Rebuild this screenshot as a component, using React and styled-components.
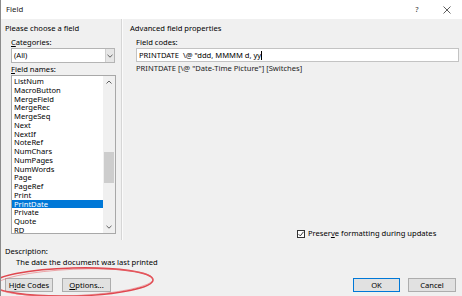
import React from "react";
import styled, { createGlobalStyle } from "styled-components";

const Global = createGlobalStyle`
  html, body { margin: 0; padding: 0; background: #fff; }
  * { box-sizing: border-box; }
`;

const Window = styled.div`
  position: relative;
  width: 462px;
  height: 296px;
  overflow: hidden;
  display: flex;
  flex-direction: column;
  background: #f0f0f0;
  border-left: 1px solid #8c8c8c;
  font-family: "Noto Sans", "Open Sans", sans-serif;
  font-size: 7.6px;
  line-height: 9px;
  color: #000;
`;

const TitleBar = styled.div`
  height: 19px;
  flex-shrink: 0;
  background: #fff;
  display: flex;
  align-items: center;
  padding-left: 5px;
`;

const Title = styled.span`
  flex: 1;
  font-size: 7.8px;
  color: #222;
`;

const TitleButton = styled.span`
  width: 30px;
  height: 19px;
  display: flex;
  align-items: center;
  justify-content: center;
  font-size: 7.5px;
  color: #333;
`;

const Main = styled.div`
  height: 221px;
  flex-shrink: 0;
  display: flex;
`;

const LeftPane = styled.div`
  width: 121px;
  flex-shrink: 0;
  padding: 5px 0 0 4px;
  border-right: 1px solid #d6d6d6;
  box-shadow: 1px 0 0 #fbfbfb;
  display: flex;
  flex-direction: column;
`;

const RightPane = styled.div`
  flex: 1;
  padding: 5px 3px 1px 8px;
  display: flex;
  flex-direction: column;
`;

const GroupTitle = styled.div`
  white-space: nowrap;
`;

const Indent = styled.div`
  margin-left: 6px;
  display: flex;
  flex-direction: column;
`;

const Label = styled.div`
  margin-top: ${(p) => p.$mt ?? 5}px;
  white-space: nowrap;
`;

const Key = styled.span`
  text-decoration: underline;
  text-underline-offset: 1px;
`;

const Select = styled.div`
  margin-top: 1px;
  width: 104px;
  height: 15px;
  background: #fff;
  border: 1px solid #b4b4b4;
  display: flex;
  align-items: center;
  padding-left: 2px;
`;

const SelectValue = styled.span`
  flex: 1;
`;

const SelectArrow = styled.span`
  width: 9px;
  height: 13px;
  background: #e6e6e6;
  border-left: 1px solid #cfcfcf;
  display: flex;
  align-items: center;
  justify-content: center;
`;

const ListBox = styled.div`
  margin-top: 1px;
  width: 105px;
  height: 159px;
  background: #fff;
  border: 1px solid #a8a8a8;
  display: flex;
`;

const Items = styled.div`
  flex: 1;
  padding-top: 1px;
  display: flex;
  flex-direction: column;
`;

const Item = styled.div`
  height: 8.75px;
  line-height: 8.75px;
  padding-left: 2px;
  white-space: nowrap;
  background: ${(p) => (p.$selected ? "#0078d7" : "transparent")};
  color: ${(p) => (p.$selected ? "#fff" : "#000")};
`;

const ScrollBar = styled.div`
  width: 12px;
  background: #f0f0f0;
  display: flex;
  flex-direction: column;
  align-items: center;
`;

const ScrollArrow = styled.div`
  height: 12px;
  width: 12px;
  display: flex;
  align-items: center;
  justify-content: center;
`;

const ScrollTrack = styled.div`
  flex: 1;
  width: 100%;
  display: flex;
  flex-direction: column;
  align-items: center;
`;

const Thumb = styled.div`
  width: 10px;
  height: 31px;
  background: #cdcdcd;
`;

const TextInput = styled.div`
  margin-top: 1px;
  height: 14px;
  background: #fff;
  border: 1px solid #c3c3c3;
  display: flex;
  align-items: center;
  padding-left: 2px;
  white-space: pre;
`;

const Caret = styled.span`
  display: inline-block;
  width: 1px;
  height: 9px;
  background: #000;
`;

const Syntax = styled.div`
  margin-top: 2px;
  white-space: pre;
  color: #222;
`;

const CheckRow = styled.label`
  margin-top: auto;
  margin-left: 167px;
  margin-bottom: 1px;
  display: flex;
  align-items: center;
  gap: 3px;
  white-space: nowrap;
`;

const CheckBox = styled.span`
  width: 8px;
  height: 8px;
  border: 1px solid #333;
  background: #fff;
  display: flex;
  align-items: center;
  justify-content: center;
`;

const Description = styled.div`
  padding-left: 4px;
  margin-top: 7px;
  display: flex;
  flex-direction: column;
`;

const DescText = styled.div`
  padding-left: 11px;
  margin-top: 2px;
  white-space: nowrap;
`;

const Footer = styled.div`
  margin-top: 11px;
  padding: 0 6px 0 4px;
  display: flex;
  align-items: center;
`;

const ButtonGroup = styled.div`
  display: flex;
  gap: ${(p) => p.$gap}px;
  margin-left: ${(p) => (p.$right ? "auto" : "0")};
`;

const Button = styled.div`
  width: ${(p) => p.$w}px;
  height: 14px;
  background: #e1e1e1;
  border: 1px solid ${(p) => (p.$default ? "#0078d7" : "#adadad")};
  display: flex;
  align-items: center;
  justify-content: center;
  white-space: nowrap;
`;

const Annotation = styled.svg`
  position: absolute;
  left: 0;
  top: 0;
  pointer-events: none;
`;

const items = [
  "ListNum", "MacroButton", "MergeField", "MergeRec", "MergeSeq", "Next", "NextIf",
  "NoteRef", "NumChars", "NumPages", "NumWords", "Page", "PageRef", "Print",
  "PrintDate", "Private", "Quote", "RD",
];

const Chevron = ({ up }) => (
  <svg width="6" height="4" viewBox="0 0 6 4">
    <path
      d={up ? "M0.5 3.5 L3 1 L5.5 3.5" : "M0.5 0.8 L3 3.2 L5.5 0.8"}
      fill="none"
      stroke="#606060"
      strokeWidth="1"
    />
  </svg>
);

export default function App() {
  return (
    <Window>
      <Global />
      <TitleBar>
        <Title>Field</Title>
        <TitleButton>?</TitleButton>
        <TitleButton>
          <svg width="8" height="8" viewBox="0 0 8 8">
            <path d="M0.5 0.5 L7.5 7.5 M7.5 0.5 L0.5 7.5" stroke="#333" strokeWidth="0.8" />
          </svg>
        </TitleButton>
      </TitleBar>
      <Main>
        <LeftPane>
          <GroupTitle>Please choose a field</GroupTitle>
          <Indent>
            <Label>
              <Key>C</Key>ategories:
            </Label>
            <Select>
              <SelectValue>(All)</SelectValue>
              <SelectArrow>
                <Chevron />
              </SelectArrow>
            </Select>
            <Label $mt={2}>
              <Key>F</Key>ield names:
            </Label>
            <ListBox>
              <Items>
                {items.map((it) => (
                  <Item key={it} $selected={it === "PrintDate"}>
                    {it}
                  </Item>
                ))}
              </Items>
              <ScrollBar>
                <ScrollArrow>
                  <Chevron up />
                </ScrollArrow>
                <ScrollTrack>
                  <Thumb style={{ marginTop: 64 }} />
                </ScrollTrack>
                <ScrollArrow>
                  <Chevron />
                </ScrollArrow>
              </ScrollBar>
            </ListBox>
          </Indent>
        </LeftPane>
        <RightPane>
          <GroupTitle>Advanced field properties</GroupTitle>
          <Indent>
            <Label>Field codes:</Label>
            <TextInput>
              {'PRINTDATE  \\@ "ddd, MMMM d, yy'}
              <Caret />
            </TextInput>
            <Syntax>{'PRINTDATE [\\@ "Date-Time Picture"] [Switches]'}</Syntax>
          </Indent>
          <CheckRow>
            <CheckBox>
              <svg width="6" height="6" viewBox="0 0 6 6">
                <path d="M0.6 3.2 L2.3 4.9 L5.5 0.8" fill="none" stroke="#222" strokeWidth="0.9" />
              </svg>
            </CheckBox>
            <span>
              Preser<Key>v</Key>e formatting during updates
            </span>
          </CheckRow>
        </RightPane>
      </Main>
      <Description>
        <div>Description:</div>
        <DescText>The date the document was last printed</DescText>
      </Description>
      <Footer>
        <ButtonGroup $gap={9}>
          <Button $w={48}>
            H<Key>i</Key>de Codes
          </Button>
          <Button $w={49}>
            <Key>O</Key>ptions...
          </Button>
        </ButtonGroup>
        <ButtonGroup $gap={8} $right>
          <Button $w={47} $default>
            OK
          </Button>
          <Button $w={48}>Cancel</Button>
        </ButtonGroup>
      </Footer>
      <Annotation width="462" height="296" viewBox="0 0 462 296">
        <ellipse
          cx="72"
          cy="282"
          rx="80"
          ry="14"
          transform="rotate(-1.5 72 282)"
          fill="none"
          stroke="#e0474f"
          strokeWidth="1.6"
        />
        <ellipse
          cx="73"
          cy="282.5"
          rx="79"
          ry="13.2"
          transform="rotate(-2.5 72 282)"
          fill="none"
          stroke="#e86a70"
          strokeWidth="0.8"
          opacity="0.7"
        />
      </Annotation>
    </Window>
  );
}
